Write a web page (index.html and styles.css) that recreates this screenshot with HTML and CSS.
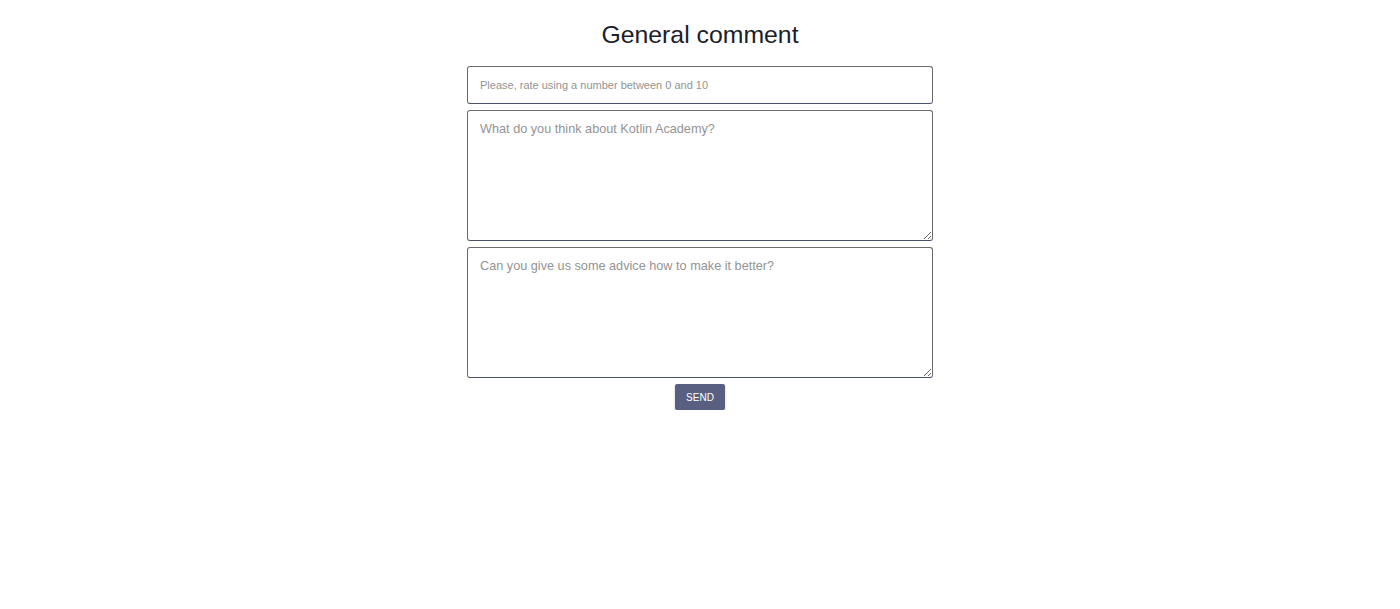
FILE: index.html
```html
<!DOCTYPE html>
<html>
<head>
<meta charset="utf-8">
<link rel="stylesheet" href="styles.css">
</head>
<body>
<div class="page">
  <h1 class="title">General comment</h1>
  <form class="form">
    <input class="field rate" type="text" placeholder="Please, rate using a number between 0 and 10">
    <textarea class="field area" placeholder="What do you think about Kotlin Academy?"></textarea>
    <textarea class="field area" placeholder="Can you give us some advice how to make it better?"></textarea>
    <button class="send" type="button">SEND</button>
  </form>
</div>
</body>
</html>
```
FILE: styles.css
```css
html, body { margin: 0; padding: 0; background: #fff; }
body { font-family: "Liberation Sans", Arial, sans-serif; }
.page { display: flex; flex-direction: column; align-items: center; padding-top: 19px; }
.title { margin: 0 0 16px; font-size: 24.8px; font-weight: 400; color: #1b1d2a; line-height: 31px; }
.form { width: 466px; display: flex; flex-direction: column; align-items: center; gap: 6px; }
.field {
  box-sizing: border-box; width: 100%; margin: 0;
  border: 1px solid #6b6b6b; border-bottom-color: #4a4f6a; border-radius: 3px;
  font-family: "Liberation Sans", Arial, sans-serif; color: #333; background: #fff;
  outline: none;
}
.field::placeholder { color: #939393; }
.rate { height: 38px; padding: 0 12px; font-size: 11px; }
.area { height: 131px; padding: 11px 12px; font-size: 12.7px; resize: vertical; }
.send {
  width: 50px; height: 26px; border: none; border-radius: 2px;
  background: #585f80; color: #fff; font-family: "Liberation Sans", Arial, sans-serif;
  font-size: 10px; padding: 0; box-shadow: 0 1px 2px rgba(0,0,0,0.25);
}
```
